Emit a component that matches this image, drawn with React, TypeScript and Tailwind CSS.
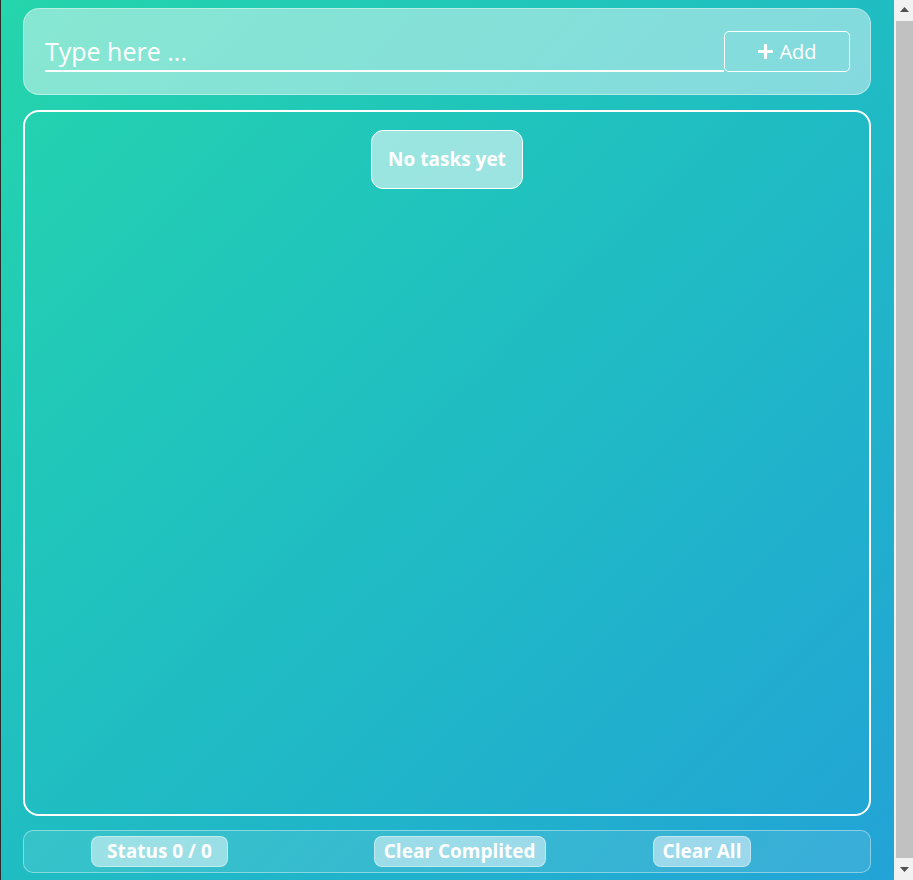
import { FaPlus } from "react-icons/fa";

function FakeScrollbar() {
	return (
		<div className="flex h-screen w-[19px] shrink-0 flex-col bg-[#f1f1f1]">
			<div className="flex h-[19px] items-center justify-center pl-[2px]">
				<svg width="9" height="5" viewBox="0 0 9 5">
					<polygon points="4.5,0 9,5 0,5" fill="#505050" />
				</svg>
			</div>
			<div className="mt-[2px] ml-[2px] h-[837px] bg-[#c1c1c1]" />
			<div className="flex flex-1 items-center justify-center pl-[2px]">
				<svg width="9" height="5" viewBox="0 0 9 5">
					<polygon points="0,0 9,0 4.5,5" fill="#505050" />
				</svg>
			</div>
		</div>
	);
}

export default function App() {
	return (
		<div className="flex h-screen overflow-hidden">
			<div
				className="h-screen w-[894px] shrink-0 border-l border-[#2b2b2b] bg-linear-to-br from-[#25d5ab] to-[#23a3d6] pt-2 pl-[22px]"
				style={{ fontFamily: '"Open Sans", "Noto Sans", sans-serif' }}
			>
				<div className="flex w-[848px] flex-col">
					<div className="flex items-end rounded-2xl border border-white/40 bg-white/45 py-[22px] pr-[20px] pl-[21px]">
						<input
							type="text"
							placeholder="Type here ..."
							className="h-[41px] flex-1 border-b-2 border-white bg-transparent text-[25px] text-white outline-none placeholder:text-white"
						/>
						<button className="flex h-[41px] w-[126px] items-center justify-center gap-[5px] rounded-[5px] border border-white text-[20px] text-white">
							<FaPlus className="text-[17px]" />
							Add
						</button>
					</div>

					<div className="mt-[15px] flex h-[706px] flex-col items-center rounded-2xl border-2 border-white pt-[18px]">
						<div className="rounded-xl border border-white bg-white/55 px-4 py-[14px] text-[19px] font-bold text-white">
							No tasks yet
						</div>
					</div>

					<div className="mt-[14px] flex h-[43px] items-center rounded-[10px] border border-white/40 bg-white/10 pl-[67px]">
						<button className="h-[31px] rounded-lg border border-white/40 bg-white/50 px-[15px] text-[19px] leading-none font-bold text-white">
							Status 0 / 0
						</button>
						<button className="ml-[146px] h-[31px] rounded-lg border border-white/40 bg-white/50 px-[9px] text-[19px] leading-none font-bold text-white">
							Clear Complited
						</button>
						<button className="ml-[107px] h-[31px] rounded-lg border border-white/40 bg-white/50 px-[9px] text-[19px] leading-none font-bold text-white">
							Clear All
						</button>
					</div>
				</div>
			</div>
			<FakeScrollbar />
		</div>
	);
}
